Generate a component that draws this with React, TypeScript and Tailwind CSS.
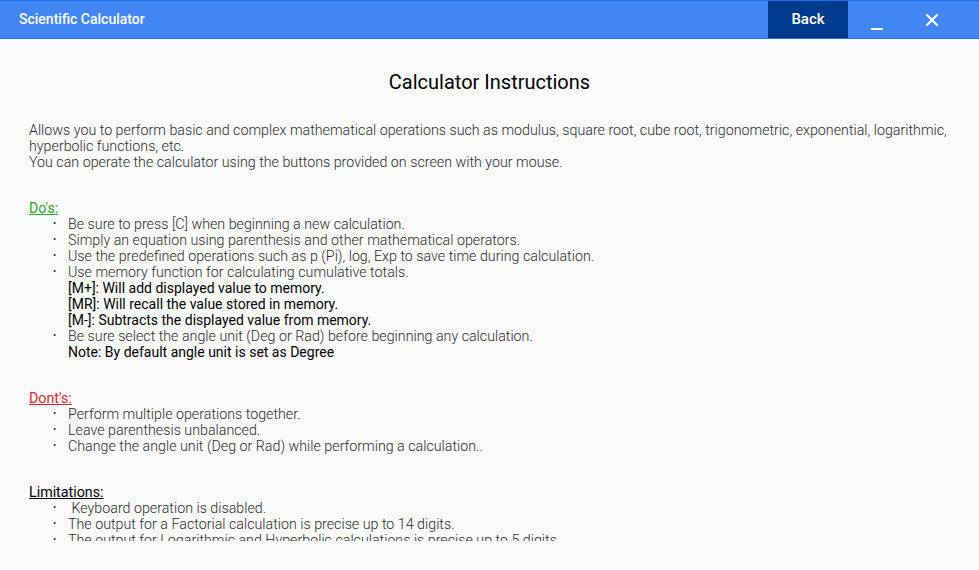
import { X } from "lucide-react";

const dos = [
  "Be sure to press [C] when beginning a new calculation.",
  "Simply an equation using parenthesis and other mathematical operators.",
  "Use the predefined operations such as p (Pi), log, Exp to save time during calculation.",
];

const donts = [
  "Perform multiple operations together.",
  "Leave parenthesis unbalanced.",
  "Change the angle unit (Deg or Rad) while performing a calculation..",
];

const limits = [
  " Keyboard operation is disabled.",
  "The output for a Factorial calculation is precise up to 14 digits.",
  "The output for Logarithmic and Hyperbolic calculations is precise up to 5 digits.",
];

function Item({ children }: { children: React.ReactNode }) {
  return (
    <li className="flex">
      <span className="w-[39px] shrink-0 pl-[24px] text-[10px]">•</span>
      <span className="whitespace-pre">{children}</span>
    </li>
  );
}

export default function App() {
  return (
    <div className="h-[570px] w-[979px] overflow-hidden bg-[#fafafa] font-['Roboto',sans-serif]">
      <header className="flex h-[39px] items-stretch border-t border-b border-[#1f6fe6] bg-[#4286f4] text-white">
        <div className="flex flex-1 items-center pl-[19px] text-[14px] font-medium">
          Scientific Calculator
        </div>
        <button className="w-[80px] bg-[#003a8c] text-[15px] font-medium">
          Back
        </button>
        <button className="flex w-[58px] items-end justify-center pb-[8px]">
          <span className="h-[2px] w-[12px] bg-white" />
        </button>
        <button className="flex w-[73px] items-center justify-start pl-[16px]">
          <X size={20} strokeWidth={2.6} />
        </button>
      </header>

      <main className="h-[502px] overflow-hidden px-[29px] text-[14.25px] leading-[16px] font-light text-[#2a2a2a]">
        <h1 className="pt-[31px] pb-[28px] text-center text-[20px] leading-[24px] font-normal text-black">
          Calculator Instructions
        </h1>
        <p>
          Allows you to perform basic and complex mathematical operations such
          as modulus, square root, cube root, trigonometric, exponential,
          logarithmic, hyperbolic functions, etc.
          <br />
          You can operate the calculator using the buttons provided on screen
          with your mouse.
        </p>

        <h2 className="mt-[30px] font-normal text-[#28a828] underline">Do's:</h2>
        <ul>
          {dos.map((d) => (
            <Item key={d}>{d}</Item>
          ))}
          <Item>
            Use memory function for calculating cumulative totals.
            <span className="block text-[14px] font-normal text-black">
              [M+]: Will add displayed value to memory.
            </span>
            <span className="block text-[14px] font-normal text-black">
              [MR]: Will recall the value stored in memory.
            </span>
            <span className="block text-[14px] font-normal text-black">
              [M-]: Subtracts the displayed value from memory.
            </span>
          </Item>
          <Item>
            Be sure select the angle unit (Deg or Rad) before beginning any
            calculation.
            <span className="block text-[14px] font-normal text-black">
              Note: By default angle unit is set as Degree
            </span>
          </Item>
        </ul>

        <h2 className="mt-[30px] font-normal text-[#e2262c] underline">Dont's:</h2>
        <ul>
          {donts.map((d) => (
            <Item key={d}>{d}</Item>
          ))}
        </ul>

        <h2 className="mt-[30px] font-normal text-black underline">Limitations:</h2>
        <ul>
          {limits.map((d) => (
            <Item key={d}>{d}</Item>
          ))}
        </ul>
      </main>
    </div>
  );
}
